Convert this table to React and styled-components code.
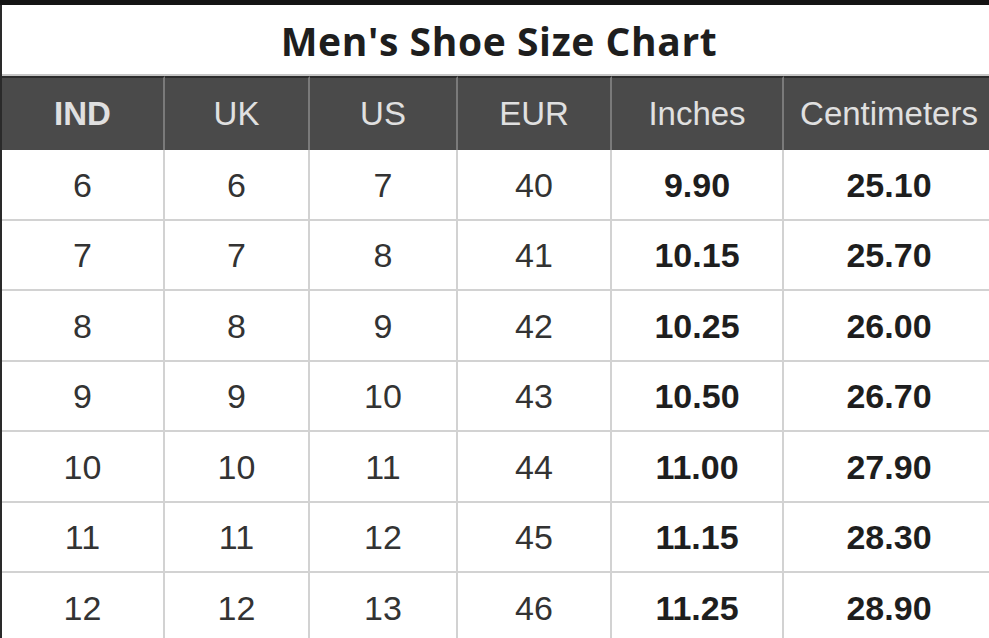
import React from "react";
import styled, { createGlobalStyle } from "styled-components";

const GlobalStyle = createGlobalStyle`
  html, body {
    margin: 0;
    padding: 0;
    background: #ffffff;
  }
  body {
    width: 989px;
    height: 638px;
    overflow: hidden;
  }
`;

const Page = styled.div`
  width: 989px;
  height: 638px;
  overflow: hidden;
  background: #ffffff;
  border-top: 5px solid #141414;
  box-sizing: border-box;
`;

const Chart = styled.div`
  width: 996px;
  border-left: 2px solid #2a2a2a;
  box-sizing: border-box;
`;

const Title = styled.div`
  height: 71px;
  display: flex;
  align-items: center;
  justify-content: center;
  font-family: "Open Sans", "Liberation Sans", sans-serif;
  font-weight: 700;
  font-size: 39px;
  letter-spacing: 0.6px;
  color: #1e1e1e;
  border-bottom: 2px solid #c6c6c6;
  padding-left: 0;
  padding-top: 1px;
  box-sizing: border-box;
`;

const Grid = styled.div`
  display: grid;
  grid-template-columns: 163px 145px 148px 154px 172px 212px;
`;

const HeadCell = styled.div`
  height: 72px;
  display: flex;
  align-items: center;
  justify-content: center;
  background: #4a4a4a;
  border-top: 2px solid #2c2c2c;
  border-right: 2px solid #7a7a7a;
  font-family: "Liberation Sans", Arial, sans-serif;
  font-size: 33px;
  color: #e0e0e0;
  font-weight: ${(p) => (p.$bold ? 700 : 400)};
`;

const Cell = styled.div`
  height: 66.5px;
  display: flex;
  align-items: center;
  justify-content: center;
  border-right: 2px solid #d2d2d2;
  border-bottom: 2px solid #d2d2d2;
  font-family: "Liberation Sans", Arial, sans-serif;
  font-size: 34px;
  font-weight: ${(p) => (p.$bold ? 700 : 400)};
  color: ${(p) => (p.$bold ? "#1e1e1e" : "#333333")};
  padding-top: 2px;
`;

const headers = ["IND", "UK", "US", "EUR", "Inches", "Centimeters"];

const rows = [
  ["6", "6", "7", "40", "9.90", "25.10"],
  ["7", "7", "8", "41", "10.15", "25.70"],
  ["8", "8", "9", "42", "10.25", "26.00"],
  ["9", "9", "10", "43", "10.50", "26.70"],
  ["10", "10", "11", "44", "11.00", "27.90"],
  ["11", "11", "12", "45", "11.15", "28.30"],
  ["12", "12", "13", "46", "11.25", "28.90"],
];

export default function App() {
  return (
    <Page>
      <GlobalStyle />
      <Chart>
        <Title>Men's Shoe Size Chart</Title>
        <Grid>
          {headers.map((h) => (
            <HeadCell key={h} $bold={h === "IND"}>
              {h}
            </HeadCell>
          ))}
          {rows.map((row, i) =>
            row.map((val, j) => (
              <Cell key={i + "-" + j} $bold={j >= 4}>
                {val}
              </Cell>
            ))
          )}
        </Grid>
      </Chart>
    </Page>
  );
}
